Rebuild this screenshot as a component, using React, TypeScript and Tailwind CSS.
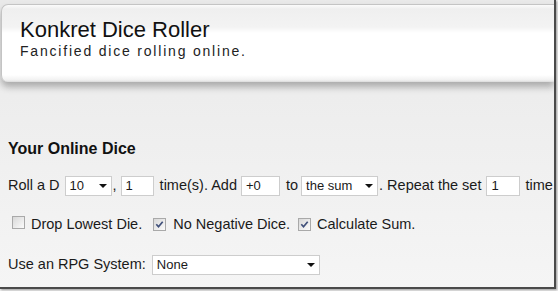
import React from "react";

const Select: React.FC<{value: string; width: string}> = ({value, width}) => (
    <span className={`inline-flex items-center justify-between h-[20px] bg-white border border-[#cdcdcd] pl-[4px] pr-[4px] text-[13px] text-[#1a1a1a] ${width}`}>
        <span>{value}</span>
        <span className="w-0 h-0 border-l-[4px] border-r-[4px] border-t-[4px] border-l-transparent border-r-transparent border-t-[#111]" />
    </span>
);

const TextBox: React.FC<{value: string; width: string}> = ({value, width}) => (
    <input
        type="text"
        defaultValue={value}
        className={`h-[20px] bg-white border border-[#cdcdcd] px-[4px] text-[13px] text-[#1a1a1a] outline-none ${width}`}
    />
);

const Check: React.FC<{checked?: boolean}> = ({checked}) => (
    <span className="inline-flex items-center justify-center w-[13px] h-[13px] border border-[#a9a9a9] bg-[linear-gradient(135deg,#d8d8d8,#fbfbfb)]">
        {checked && (
            <svg width="9" height="9" viewBox="0 0 9 9">
                <path d="M1.3 4.3 L3.5 6.7 L7.7 1.8" fill="none" stroke="#3f4f7a" strokeWidth="1.7" />
            </svg>
        )}
    </span>
);

const App: React.FC = () => {
    return (
        <div className="w-[558px] h-[291px] bg-[#efefef] overflow-hidden" style={{fontFamily: '"Liberation Sans", Arial, sans-serif'}}>
            <div className="w-[556px] h-[289px] border-r-[2px] border-b-[2px] border-[#4a4a4a] shadow-[1px_1px_2px_rgba(0,0,0,0.35)] overflow-hidden bg-[linear-gradient(to_bottom,#e9e9e9,#f5f5f5)]">
                <header className="mt-[4px] ml-[1px] h-[78px] rounded-l-[7px] border-t border-l border-[#c4c4c4] bg-[linear-gradient(to_bottom,#fbfbfb_0px,#efefef_4px,#f3f3f3_22px,#ffffff_28px,#ffffff_70px,#f1f1f1_75px,#dadada_77px)] shadow-[0_5px_7px_rgba(0,0,0,0.28)] pl-[18px] pt-[12px]">
                    <h1 className="text-[22px] leading-[26px] text-[#111]">Konkret Dice Roller</h1>
                    <p className="text-[14px] leading-[16px] tracking-[1.8px] text-[#222]">Fancified dice rolling online.</p>
                </header>

                <main className="px-[8px] pt-[57px] text-[14.5px] text-[#1a1a1a] whitespace-nowrap">
                    <h2 className="text-[16px] leading-[20px] font-bold text-[#111]">Your Online Dice</h2>

                    <div className="mt-[17px] flex items-center h-[20px]">
                        <span>Roll a D</span>
                        <span className="ml-[5px]"><Select value="10" width="w-[47px]" /></span>
                        <span className="ml-[1px]">,</span>
                        <span className="ml-[4px]"><TextBox value="1" width="w-[33px]" /></span>
                        <span className="ml-[6px]">time(s). Add</span>
                        <span className="ml-[4px]"><TextBox value="+0" width="w-[39px]" /></span>
                        <span className="ml-[6px]">to</span>
                        <span className="ml-[3px]"><Select value="the sum" width="w-[77px]" /></span>
                        <span className="ml-[1px]">. Repeat the set</span>
                        <span className="ml-[5px]"><TextBox value="1" width="w-[34px]" /></span>
                        <span className="ml-[5px]">time</span>
                    </div>

                    <div className="mt-[19px] flex items-center h-[20px]">
                        <span className="ml-[4px]"><Check /></span>
                        <span className="ml-[6px]">Drop Lowest Die.</span>
                        <span className="ml-[11px]"><Check checked /></span>
                        <span className="ml-[7px]">No Negative Dice.</span>
                        <span className="ml-[8px]"><Check checked /></span>
                        <span className="ml-[6px]">Calculate Sum.</span>
                    </div>

                    <div className="mt-[20px] flex items-center h-[20px]">
                        <span>Use an RPG System:</span>
                        <span className="ml-[6px]"><Select value="None" width="w-[168px]" /></span>
                    </div>
                </main>
            </div>
        </div>
    );
};

export default App;
